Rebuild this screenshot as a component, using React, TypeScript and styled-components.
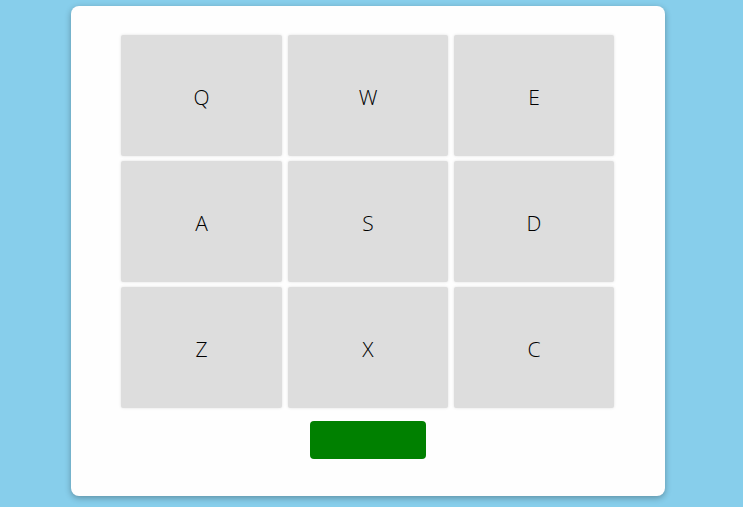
import styled, { createGlobalStyle } from "styled-components";

const GlobalStyle = createGlobalStyle`
  html, body {
    margin: 0;
    padding: 0;
    background: #87ceeb;
    font-family: "Open Sans", "Noto Sans", sans-serif;
  }
`;

const Page = styled.div`
  display: flex;
  justify-content: center;
  padding: 6px 7px 0 0;
  height: 507px;
  box-sizing: border-box;
`;

const Card = styled.div`
  width: 594px;
  height: 490px;
  box-sizing: border-box;
  background: #fefefe;
  border-radius: 8px;
  box-shadow: 0 2px 6px rgba(0, 0, 0, 0.3);
  padding: 29px 51px 0 50px;
  display: flex;
  flex-direction: column;
  align-items: center;
`;

const Pad = styled.div`
  width: 100%;
  display: grid;
  grid-template-columns: 161px 160px 160px;
  grid-auto-rows: 121px;
  column-gap: 6px;
  row-gap: 5px;
`;

const Key = styled.button`
  border: none;
  border-radius: 2px;
  background: #dddddd;
  box-shadow: 0 0 3px rgba(0, 0, 0, 0.12);
  font-family: inherit;
  font-size: 21px;
  font-weight: 300;
  color: #000;
  display: flex;
  align-items: center;
  justify-content: center;
  padding: 3px 0 0;
`;

const Submit = styled.button`
  margin-top: 13px;
  width: 116px;
  height: 38px;
  border: none;
  border-radius: 4px;
  background: #008000;
`;

const keys = ["Q", "W", "E", "A", "S", "D", "Z", "X", "C"];

export default function App() {
  return (
    <>
      <GlobalStyle />
      <Page>
        <Card>
          <Pad>
            {keys.map((k) => (
              <Key key={k}>{k}</Key>
            ))}
          </Pad>
          <Submit />
        </Card>
      </Page>
    </>
  );
}
